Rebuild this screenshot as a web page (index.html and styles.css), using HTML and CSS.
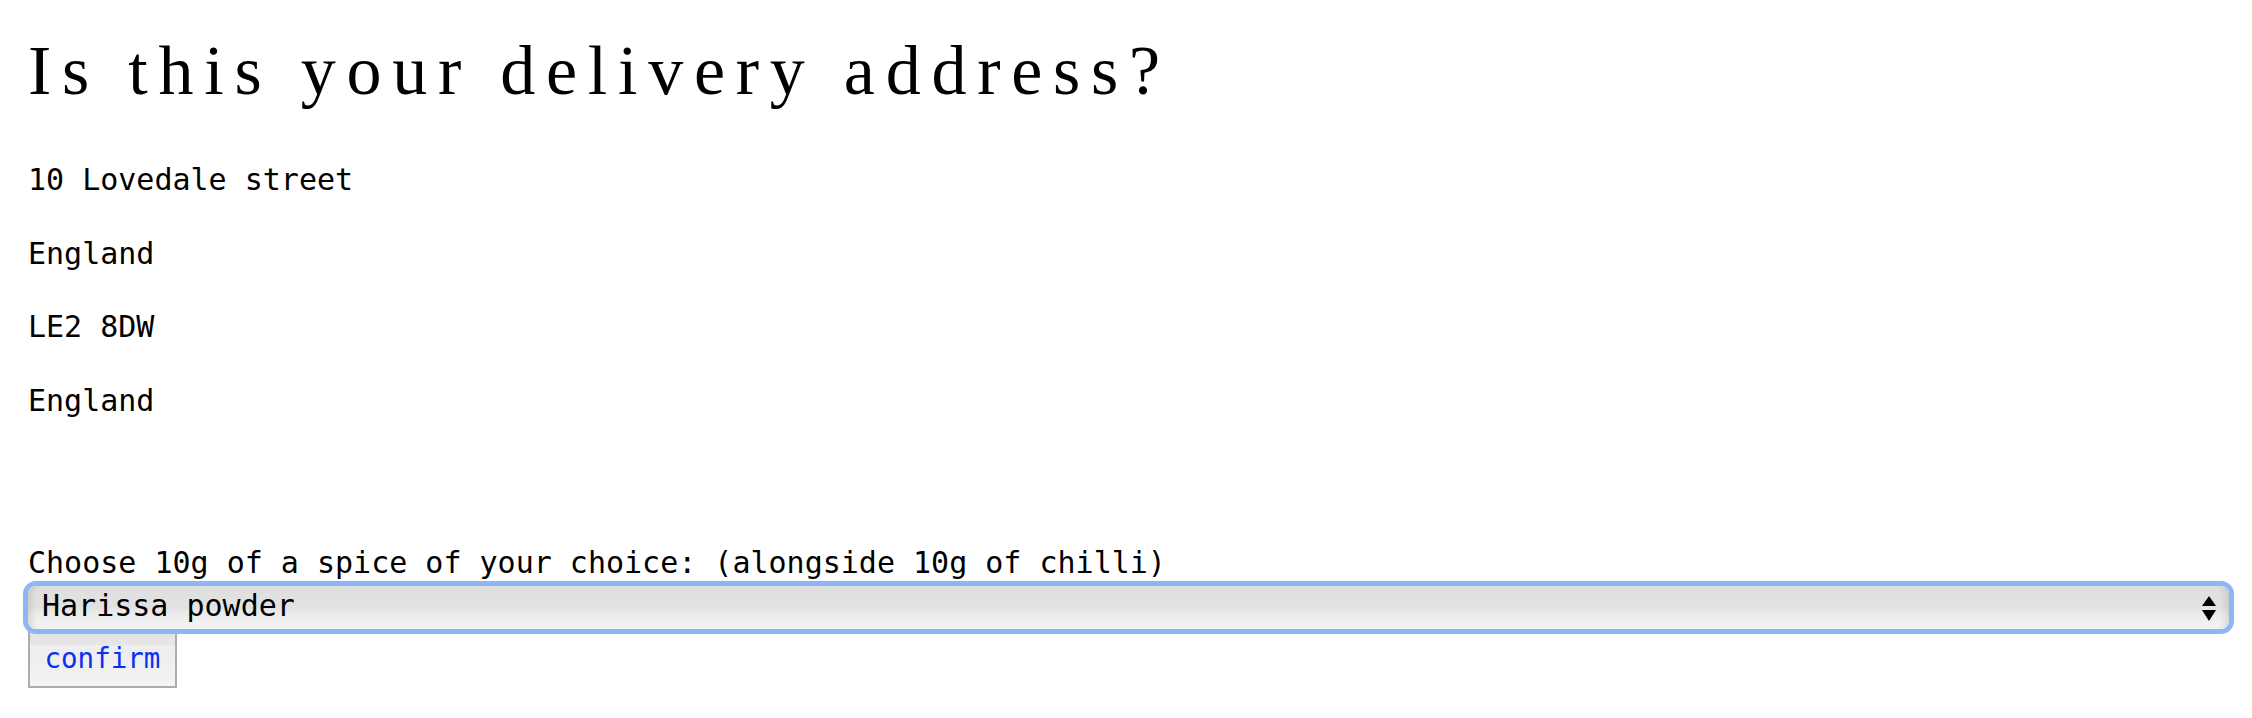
FILE: index.html
```html
<!DOCTYPE html>
<html lang="en">
<head>
<meta charset="utf-8">
<title>Delivery address</title>
<link rel="stylesheet" href="styles.css">
</head>
<body>
<main class="page">
  <h1 class="title">Is this your delivery address?</h1>
  <div class="address">
    <p class="address-line">10 Lovedale street</p>
    <p class="address-line">England</p>
    <p class="address-line">LE2 8DW</p>
    <p class="address-line">England</p>
  </div>
  <form class="spice-form">
    <label class="spice-label" for="spice">Choose 10g of a spice of your choice: (alongside 10g of chilli)</label>
    <div class="select-wrap">
      <select id="spice" class="spice-select">
        <option>Harissa powder</option>
        <option>Paprika</option>
        <option>Cumin</option>
      </select>
      <svg class="select-arrows" width="14" height="25" viewBox="0 0 14 25" aria-hidden="true">
        <polygon points="7,0 14,10 0,10" fill="#000"/>
        <polygon points="0,14 14,14 7,25" fill="#000"/>
      </svg>
    </div>
    <button type="button" class="confirm-btn">confirm</button>
  </form>
</main>
</body>
</html>
```

FILE: styles.css
```css
html, body {
  margin: 0;
  padding: 0;
  background: #ffffff;
}

.page {
  padding: 32px 23px 0 28px;
  font-family: "DejaVu Sans Mono", "Liberation Mono", monospace;
  font-size: 30px;
  color: #000;
}

.title {
  margin: 0 0 52px;
  font-family: "Liberation Serif", "Times New Roman", serif;
  font-size: 70px;
  font-weight: 400;
  line-height: 78px;
  letter-spacing: 10.75px;
  white-space: nowrap;
}

.address {
  display: flow-root;
}

.address-line {
  margin: 0 0 38.7px;
  line-height: 35px;
}

.spice-form {
  margin: 88.5px 0 0;
  display: flex;
  flex-direction: column;
  align-items: flex-start;
}

.spice-label {
  display: block;
  line-height: 35px;
}

.select-wrap {
  position: relative;
  align-self: stretch;
  margin-top: 6px;
}

.spice-select {
  -webkit-appearance: none;
  appearance: none;
  display: block;
  width: 100%;
  height: 43px;
  box-sizing: border-box;
  margin: 0;
  padding: 0 40px 4px 14px;
  border: 0;
  border-radius: 8px;
  font-family: "DejaVu Sans Mono", "Liberation Mono", monospace;
  font-size: 30px;
  line-height: 35px;
  color: #000;
  background: linear-gradient(to bottom, #dfdfdf 0%, #e2e2e2 50%, #ebebeb 62%, #f4f4f4 100%);
  box-shadow:
    0 0 0 5px #8fb5f4,
    inset 10px 0 8px -8px rgba(0, 0, 0, 0.14),
    inset -10px 0 8px -8px rgba(0, 0, 0, 0.14);
  outline: none;
}

.select-arrows {
  position: absolute;
  right: 13px;
  top: 9.5px;
  pointer-events: none;
}

.confirm-btn {
  margin-top: 1px;
  box-sizing: border-box;
  width: 149px;
  height: 58px;
  padding: 9.8px 13.5px 12.2px 14.5px;
  border: 2px solid #adadad;
  border-radius: 0;
  font-family: "DejaVu Sans Mono", "Liberation Mono", monospace;
  font-size: 27.5px;
  line-height: 32px;
  text-align: left;
  color: #0b30f2;
  background: linear-gradient(to bottom, #e4e4e4 0%, #e6e6e6 24%, #f2f2f2 27%, #ededed 32%, #f0f0f0 70%, #f3f3f3 100%);
  cursor: pointer;
}
```
